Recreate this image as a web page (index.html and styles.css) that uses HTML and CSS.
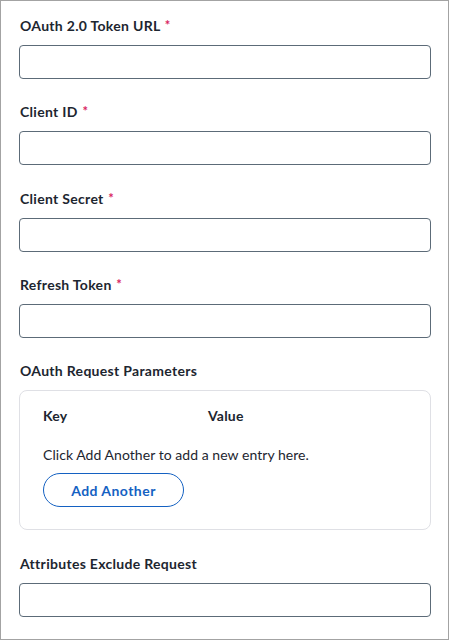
FILE: index.html
```html
<!DOCTYPE html>
<html>
<head>
<meta charset="utf-8">
<link rel="stylesheet" href="styles.css">
</head>
<body>
<div class="frame">
  <div class="field">
    <label class="label">OAuth 2.0 Token URL <span class="req">*</span></label>
    <input class="input" type="text">
  </div>
  <div class="field field-wide">
    <label class="label">Client ID <span class="req">*</span></label>
    <input class="input" type="text">
  </div>
  <div class="field">
    <label class="label">Client Secret <span class="req">*</span></label>
    <input class="input" type="text">
  </div>
  <div class="field">
    <label class="label">Refresh Token <span class="req">*</span></label>
    <input class="input" type="text">
  </div>
  <div class="field field-wide">
    <label class="label">OAuth Request Parameters</label>
    <div class="card">
      <div class="card-head">
        <span>Key</span>
        <span>Value</span>
      </div>
      <p class="empty">Click Add Another to add a new entry here.</p>
      <button class="btn" type="button">Add Another</button>
    </div>
  </div>
  <div class="field">
    <label class="label">Attributes Exclude Request</label>
    <input class="input" type="text">
  </div>
</div>
</body>
</html>
```
FILE: styles.css
```css
* { box-sizing: border-box; }
html, body { margin: 0; padding: 0; background: #fff; }
body {
  font-family: Lato, "Liberation Sans", sans-serif;
  font-size: 14px;
  color: #1d2630;
}
.frame {
  width: 449px;
  height: 640px;
  border: 1px solid #a3a3a3;
  padding: 15px 17px 0 18px;
  overflow: hidden;
}
.field {
  display: flex;
  flex-direction: column;
  margin-bottom: 23px;
}
.field-wide {
  margin-bottom: 24px;
}
.label {
  display: block;
  font-weight: 700;
  line-height: 20px;
  height: 20px;
  margin-bottom: 9px;
  padding-left: 1px;
  letter-spacing: 0.3px;
  color: #1d2630;
}
.req {
  color: #d8245f;
  font-size: 13px;
  margin-left: 1px;
  position: relative;
  top: -1px;
}
.input {
  width: 412px;
  height: 34px;
  border: 1px solid #5c6b78;
  border-radius: 4px;
  background: #fff;
  margin: 0;
  padding: 0 8px;
  font: inherit;
}
.card {
  width: 412px;
  height: 140px;
  border: 1px solid #dfe0e5;
  border-radius: 8px;
  padding: 15px 23px 0 23px;
}
.card-head {
  display: grid;
  grid-template-columns: 165px auto;
  font-weight: 700;
  line-height: 20px;
  letter-spacing: 0.2px;
}
.empty {
  margin: 19px 0 8px;
  line-height: 20px;
  letter-spacing: 0.05px;
}
.btn {
  width: 141px;
  height: 34px;
  border: 1px solid #1461c2;
  border-radius: 17px;
  background: #fff;
  color: #1461c2;
  font: inherit;
  font-weight: 700;
  letter-spacing: 0.45px;
  padding: 0;
}
```
